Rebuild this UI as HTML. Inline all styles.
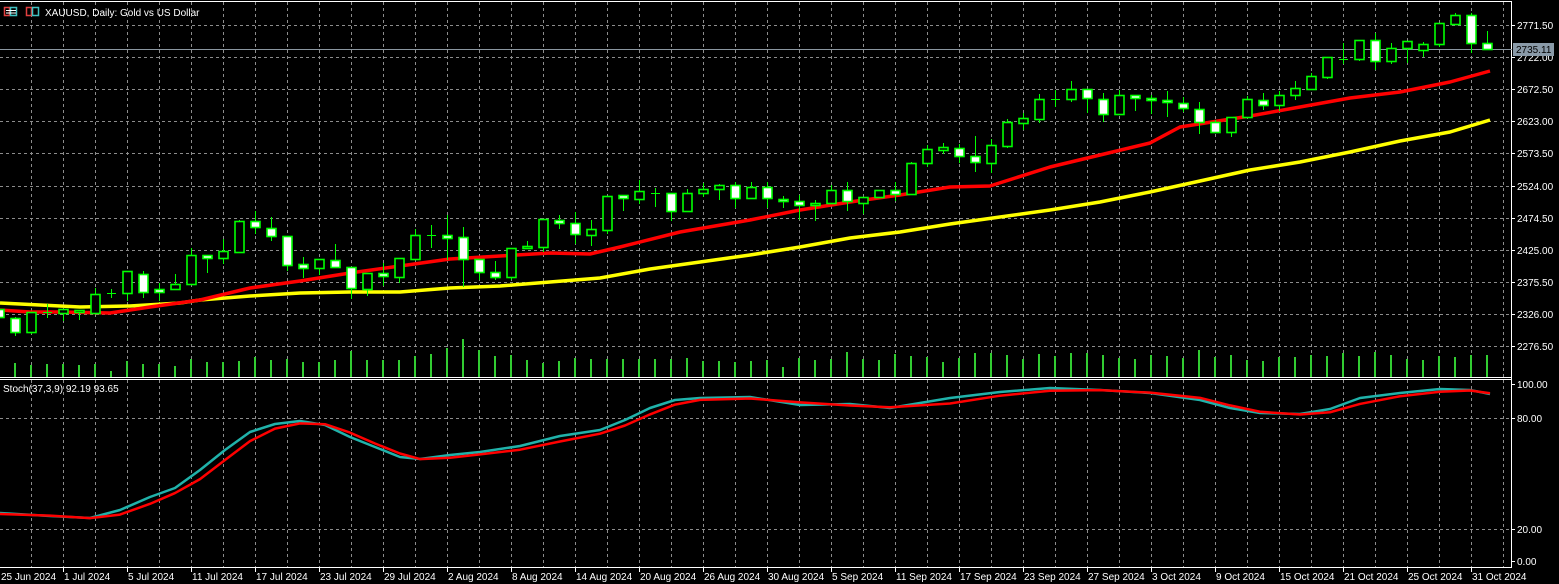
<!DOCTYPE html>
<html><head><meta charset="utf-8"><style>
html,body{margin:0;padding:0;background:#000;width:1559px;height:584px;overflow:hidden}
svg{display:block}
text{font-family:"Liberation Sans",sans-serif;font-size:10px;fill:#fff}
</style></head><body>
<svg id="s" width="1559" height="584" xmlns="http://www.w3.org/2000/svg">
<rect width="1559" height="584" fill="#000"/>
<g id="grid" stroke="#8c8c8c" stroke-width="1" stroke-dasharray="3,3"></g>
<line x1="0" y1="1.5" x2="1512" y2="1.5" stroke="#fff"/>
<line x1="1511.5" y1="1" x2="1511.5" y2="568" stroke="#fff"/>
<line x1="0" y1="377.5" x2="1512" y2="377.5" stroke="#fff"/>
<line x1="0" y1="379.5" x2="1512" y2="379.5" stroke="#fff"/>
<line x1="0" y1="567.5" x2="1512" y2="567.5" stroke="#fff"/>
<line x1="0" y1="49.5" x2="1512" y2="49.5" stroke="#8a96a0"/>
<g id="vol" stroke="#32cd32" stroke-width="2"></g>
<g id="ma"></g>
<g id="cdl" stroke="#00ff00" stroke-width="1"></g>
<g id="stoch" fill="none" stroke-width="2"></g>
<g id="ticks" stroke="#fff"></g>
<!-- title -->
<rect x="4.5" y="7.5" width="5" height="8" fill="none" stroke="#e04040" stroke-width="1.5"/><rect x="10.5" y="7.5" width="6" height="8" fill="none" stroke="#40c0c0" stroke-width="1.5"/>
<line x1="6" y1="10.5" x2="16" y2="10.5" stroke="#fff"/><line x1="6" y1="13" x2="16" y2="13" stroke="#fff"/>
<rect x="26.5" y="7.5" width="5" height="8" fill="none" stroke="#e04040" stroke-width="1.5"/><rect x="32.5" y="7.5" width="6" height="8" fill="none" stroke="#40c0c0" stroke-width="1.5"/>
<text x="45" y="16">XAUUSD, Daily:  Gold vs US Dollar</text>
<text x="3" y="392">Stoch(37,3,9) 92.19 93.65</text>
<!-- price labels -->
<text x="1517" y="29">2771.50</text>
<text x="1517" y="61">2722.00</text>
<text x="1517" y="93">2672.50</text>
<text x="1517" y="125">2623.00</text>
<text x="1517" y="157">2573.50</text>
<text x="1517" y="190">2524.00</text>
<text x="1517" y="222">2474.50</text>
<text x="1517" y="254">2425.00</text>
<text x="1517" y="286">2375.50</text>
<text x="1517" y="318">2326.00</text>
<text x="1517" y="350">2276.50</text>
<rect x="1513" y="43" width="41" height="13" fill="#8a9aa8"/>
<text x="1516" y="53" style="fill:#000">2735.11</text>
<text x="1517" y="388">100.00</text>
<text x="1517" y="422">80.00</text>
<text x="1517" y="533">20.00</text>
<text x="1517" y="565">0.00</text>
<!-- dates -->
<text x="1" y="580">25 Jun 2024</text><text x="64" y="580">1 Jul 2024</text><text x="128" y="580">5 Jul 2024</text><text x="192" y="580">11 Jul 2024</text>
<text x="256" y="580">17 Jul 2024</text><text x="320" y="580">23 Jul 2024</text><text x="384" y="580">29 Jul 2024</text><text x="448" y="580">2 Aug 2024</text>
<text x="512" y="580">8 Aug 2024</text><text x="576" y="580">14 Aug 2024</text><text x="640" y="580">20 Aug 2024</text><text x="704" y="580">26 Aug 2024</text>
<text x="768" y="580">30 Aug 2024</text><text x="832" y="580">5 Sep 2024</text><text x="896" y="580">11 Sep 2024</text><text x="960" y="580">17 Sep 2024</text>
<text x="1024" y="580">23 Sep 2024</text><text x="1088" y="580">27 Sep 2024</text><text x="1152" y="580">3 Oct 2024</text><text x="1216" y="580">9 Oct 2024</text>
<text x="1280" y="580">15 Oct 2024</text><text x="1344" y="580">21 Oct 2024</text><text x="1408" y="580">25 Oct 2024</text><text x="1472" y="580">31 Oct 2024</text>
</svg>
<script>
var NS="http://www.w3.org/2000/svg";
function el(p,t,a){var e=document.createElementNS(NS,t);for(var k in a)e.setAttribute(k,a[k]);document.getElementById(p).appendChild(e);return e;}
for(var x=31;x<1511;x+=32){el("grid","line",{x1:x+.5,y1:2,x2:x+.5,y2:377});el("grid","line",{x1:x+.5,y1:380,x2:x+.5,y2:567});}
[25,57,89,121,153,186,218,250,282,314,346].forEach(function(y){el("grid","line",{x1:0,y1:y+.5,x2:1511,y2:y+.5});el("ticks","line",{x1:1511,y1:y+.5,x2:1515,y2:y+.5});});
[418,529].forEach(function(y){el("grid","line",{x1:0,y1:y+.5,x2:1511,y2:y+.5});});
[384,418,529,561].forEach(function(y){el("ticks","line",{x1:1511,y1:y+.5,x2:1515,y2:y+.5});});
for(var x=63;x<1511;x+=64){el("ticks","line",{x1:x+.5,y1:567,x2:x+.5,y2:572});}
var C=[[-1,309,317,309,317,1],[0,318,332,317,335,1],[1,312,332,312,333,0],[2,312,312,304,317,2],[3,309,313,309,320,0],[4,310,312,310,319,0],
[5,294,313,288,313,0],[6,293,293,289,297,2],[7,271,293,271,300,0],[8,274,292,271,297,1],[9,289,292,283,300,1],[10,284,289,274,289,0],
[11,255,284,248,284,0],[12,255,258,255,272,1],[13,251,258,239,263,0],[14,221,252,220,252,0],[15,221,227,211,233,1],[16,228,236,217,240,1],
[17,236,265,236,270,1],[18,264,268,257,277,1],[19,259,268,259,274,0],[20,260,267,244,267,1],[21,267,288,267,298,1],[22,273,289,273,295,0],
[23,273,276,263,285,1],[24,258,277,258,282,0],[25,235,259,229,259,0],[26,235,235,225,247,2],[27,235,238,215,259,1],[28,237,259,227,286,1],
[29,259,272,259,279,1],[30,272,277,261,279,1],[31,248,277,248,279,0],[32,246,248,241,248,0],[33,219,247,219,251,0],[34,220,223,215,228,1],
[35,223,234,212,243,1],[36,229,235,220,245,0],[37,196,230,196,233,0],[38,195,198,195,210,1],[39,191,199,180,203,0],[40,193,193,188,206,2],
[41,193,211,193,220,1],[42,193,211,189,211,0],[43,189,193,183,196,0],[44,185,189,184,199,0],[45,185,198,182,207,1],[46,187,198,182,198,0],
[47,187,198,182,207,1],[48,199,201,196,207,1],[49,201,205,195,219,1],[50,203,205,200,220,0],[51,190,203,185,203,0],[52,190,201,182,210,1],
[53,197,203,197,213,0],[54,190,197,190,197,0],[55,190,194,182,200,1],[56,163,194,162,194,0],[57,149,163,145,166,0],[58,147,150,143,153,0],
[59,148,156,144,162,1],[60,156,162,136,171,1],[61,145,163,139,172,0],[62,122,146,119,147,0],[63,118,123,113,129,0],[64,99,119,94,122,0],
[65,99,99,90,106,2],[66,89,99,81,101,0],[67,89,98,89,112,1],[68,99,114,93,121,1],[69,95,114,90,114,0],[70,95,98,95,110,1],
[71,98,100,95,113,1],[72,100,102,91,116,1],[73,103,108,97,111,1],[74,109,122,102,133,1],[75,122,132,120,132,1],[76,117,132,117,136,0],
[77,99,117,96,117,0],[78,100,105,93,109,1],[79,95,105,91,110,0],[80,88,95,81,99,0],[81,76,89,73,89,0],[82,57,77,57,78,0],
[83,59,59,43,63,2],[84,40,59,40,60,0],[85,40,61,33,69,1],[86,48,61,43,63,0],[87,41,48,41,62,0],[88,44,50,42,56,0],
[89,23,44,23,46,0],[90,15,24,13,24,0],[91,15,43,13,52,1],[92,43,49,31,49,1]];
var V=[363,365,364,364,365,364,371,361,364,364,366,359,362,362,361,357,360,359,362,362,360,351,360,360,360,356,354,348,339,350,356,355,360,363,361,358,359,359,359,359,359,359,358,361,361,362,361,360,367,358,360,359,352,359,360,354,356,357,362,358,353,353,355,359,354,356,353,353,355,358,359,355,356,358,350,357,355,360,361,357,357,355,356,353,356,352,355,359,360,356,357,355,355];
V.forEach(function(y,i){var x=15+16*i;el("vol","line",{x1:x,y1:y,x2:x,y2:377});});
C.forEach(function(c){var x=15+16*c[0];
 el("cdl","line",{x1:x+.5,y1:c[3],x2:x+.5,y2:c[4]+1});
 if(c[5]==2){el("cdl","line",{x1:x-4,y1:c[1]+.5,x2:x+5,y2:c[1]+.5});}
 else{var h=Math.max(c[2]-c[1],2);el("cdl","rect",{x:x-4,y:c[1]+.5,width:9,height:h,fill:c[5]?"#fff":"#000","stroke-width":1.6});}
});
function poly(g,pts,col,w){el(g,"polyline",{points:pts.map(function(p){return p.join(",")}).join(" "),fill:"none",stroke:col,"stroke-width":w,"stroke-linejoin":"round"});}
poly("ma",[[0,303],[40,305],[80,307],[130,306],[180,303],[200,300],[250,296],[300,293],[350,292],[400,292],[450,288],[500,286],[550,282],[600,278],[650,269],[700,262],[750,255],[800,247],[850,238],[900,232],[950,224],[1000,217],[1050,210],[1100,202],[1150,192],[1200,181],[1250,170],[1300,162],[1350,152],[1400,141],[1450,132],[1490,120]],"#ffff00",3.5);
poly("ma",[[0,310],[30,312],[60,312],[110,313],[130,310],[150,307],[200,300],[250,288],[300,281],[350,273],[400,266],[450,259],[500,256],[550,253],[590,254],[620,247],[680,232],[750,220],[800,210],[850,202],[900,195],[950,187],[990,186],[1050,167],[1100,155],[1150,143],[1180,127],[1250,116],[1300,107],[1350,98],[1400,92],[1450,82],[1490,71]],"#ff0000",3.5);
var T=[[0,513],[50,516],[90,518],[120,510],[150,497],[175,488],[200,470],[225,450],[250,432],[275,424],[300,421],[325,425],[350,437],[375,447],[400,457],[420,459],[450,455],[480,452],[520,446],[560,436],[600,430],[625,420],[650,408],[675,400],[700,398],[750,397],[800,405],[850,404],[890,408],[950,398],[1000,392],[1050,388],[1100,390],[1150,393],[1200,400],[1230,408],[1260,413],[1300,414],[1330,409],[1360,398],[1400,393],[1440,389],[1470,390],[1490,394]];
var R=T.map(function(p,i){var q=T[Math.max(0,i-1)];return [p[0],(p[1]*0.55+q[1]*0.45)+1];});
poly("stoch",T,"#20b2aa",2.5);
poly("stoch",R,"#ff0000",2.5);
</script>
</body></html>
